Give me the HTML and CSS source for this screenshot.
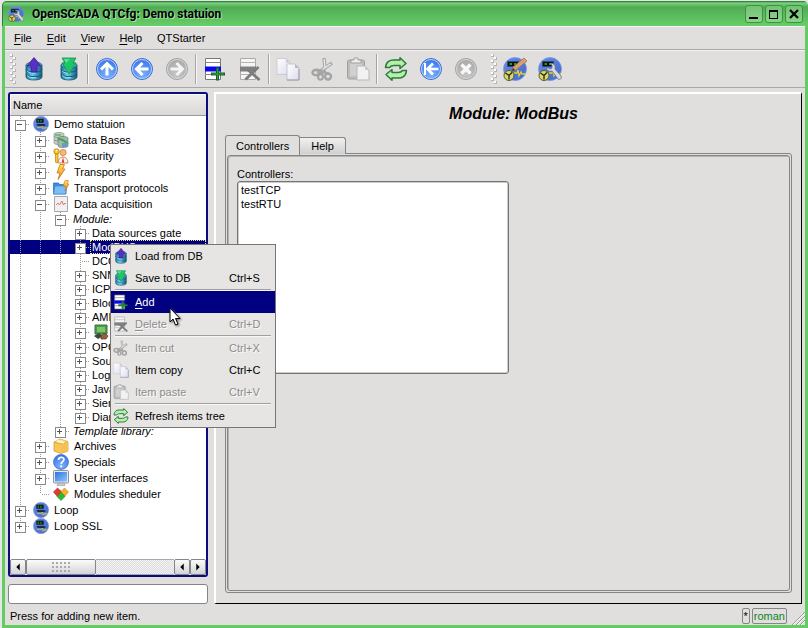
FILE: index.html
```
<!DOCTYPE html>
<html lang="en">
<head>
<meta charset="utf-8">
<title>OpenSCADA QTCfg: Demo statuion</title>
<link rel="stylesheet" href="styles.css">
</head>
<body>
<svg class="defs" width="0" height="0" aria-hidden="true">
  <defs>
    <radialGradient id="gBlue" cx="50%" cy="75%" r="75%"><stop offset="0" stop-color="#7db4fb"/><stop offset="1" stop-color="#3671e8"/></radialGradient>
    <radialGradient id="gGray" cx="50%" cy="75%" r="75%"><stop offset="0" stop-color="#c6c6c6"/><stop offset="1" stop-color="#a6a6a6"/></radialGradient>
    <linearGradient id="gDb"><stop offset="0" stop-color="#1b6f9c"/><stop offset=".4" stop-color="#62cdea"/><stop offset="1" stop-color="#155a80"/></linearGradient>
    <linearGradient id="gPage" x2="1" y2="1"><stop offset="0" stop-color="#ffffff"/><stop offset="1" stop-color="#dcdcec"/></linearGradient>
    <linearGradient id="gScada" x2="1" y2="1"><stop offset="0" stop-color="#6a8fe6"/><stop offset="1" stop-color="#3f66cc"/></linearGradient>
    <linearGradient id="gScreen" x2="1" y2="1"><stop offset="0" stop-color="#2f73e0"/><stop offset="1" stop-color="#8cc4ff"/></linearGradient>
    <linearGradient id="gFire" x2="0" y2="1"><stop offset="0" stop-color="#ffe25a"/><stop offset="1" stop-color="#f08a10"/></linearGradient>
  </defs>
  <symbol id="i-db" viewBox="0 0 24 24">
    <path d="M4 8v12c0 4 16 4 16 0V8z" fill="url(#gDb)" stroke="#20506a" stroke-width=".8"/>
    <path d="M4 12.500c0 3.500 16 3.500 16 0M4 17c0 3.500 16 3.500 16 0" fill="none" stroke="#175878"/>
    <path d="M5 14c2 2.500 7 2.300 9 2M5 18.500c2 2.500 7 2.300 9 2" fill="none" stroke="#a5eaf8" stroke-width=".8"/>
    <ellipse cx="12" cy="8" rx="8" ry="3" fill="#4fb4d4" stroke="#2a6a88" stroke-width=".8"/>
  </symbol>
  <symbol id="i-load" viewBox="0 0 24 24">
    <use href="#i-db"/>
    <path d="M12 .500L19 9h-4v6H9V9H5z" fill="#5730c4" stroke="#3c1c98" stroke-width=".8"/>
  </symbol>
  <symbol id="i-save" viewBox="0 0 24 24">
    <use href="#i-db"/>
    <path d="M5 1h14l-3 5h3l-7 11L5 6h3z" fill="#22c46a" stroke="#129048" stroke-width=".8"/>
    <path d="M7 2h6l-4 4" fill="#5be098"/>
  </symbol>
  <symbol id="i-up" viewBox="0 0 24 24">
    <circle cx="12" cy="12" r="10.500" fill="url(#gBlue)" stroke="#3f6fd0"/><circle cx="12" cy="12" r="9.500" fill="none" stroke="#b8d4ff"/>
    <path d="M12 18.500V7M6 12.500L12 6.500l6 6" fill="none" stroke="#fff" stroke-width="3"/>
  </symbol>
  <symbol id="i-left" viewBox="0 0 24 24">
    <circle cx="12" cy="12" r="10.500" fill="url(#gBlue)" stroke="#3f6fd0"/><circle cx="12" cy="12" r="9.500" fill="none" stroke="#b8d4ff"/>
    <path d="M18.500 12H7M12.500 6L6.500 12l6 6" fill="none" stroke="#fff" stroke-width="3"/>
  </symbol>
  <symbol id="i-right" viewBox="0 0 24 24">
    <circle cx="12" cy="12" r="10.500" fill="url(#gGray)" stroke="#a2a2a2"/><circle cx="12" cy="12" r="9.500" fill="none" stroke="#d8d8d8"/>
    <path d="M5.500 12H17M11.500 6l6 6-6 6" fill="none" stroke="#f4f4f4" stroke-width="3"/>
  </symbol>
  <symbol id="i-start" viewBox="0 0 24 24">
    <circle cx="12" cy="12" r="10.500" fill="url(#gBlue)" stroke="#3f6fd0"/><circle cx="12" cy="12" r="9.500" fill="none" stroke="#b8d4ff"/>
    <path d="M19.500 12H9M14 6.500L8.500 12l5.500 5.500" fill="none" stroke="#fff" stroke-width="2.600"/><path d="M6 6v12" stroke="#fff" stroke-width="2"/>
  </symbol>
  <symbol id="i-stop" viewBox="0 0 24 24">
    <circle cx="12" cy="12" r="10.500" fill="url(#gGray)" stroke="#a2a2a2"/><circle cx="12" cy="12" r="9.500" fill="none" stroke="#d8d8d8"/>
    <path d="M7.500 7.500l9 9M16.500 7.500l-9 9" stroke="#f8f8f8" stroke-width="3.200"/>
  </symbol>
  <symbol id="i-add" viewBox="0 0 24 24">
    <path d="M2.500 1.500h15v21h-15z" fill="#fff" stroke="#777"/>
    <path d="M2 5.500h16M2 17.500h16" stroke="#888"/><path d="M2 9.500h16v5H2z" fill="#0a0ae8"/>
    <path d="M14.500 10.500v13M8 17h14" stroke="#166428" stroke-width="3"/><path d="M14.500 11.500v11M9 17h12" stroke="#2ea048"/>
  </symbol>
  <symbol id="i-del" viewBox="0 0 24 24">
    <path d="M2.500 1.500h15v21h-15z" fill="#f4f4f4" stroke="#aaa"/>
    <path d="M2 5.500h16M2 17.500h16" stroke="#b4b4b4"/><path d="M2 9.500h16v5H2z" fill="#808080"/>
    <path d="M7.500 22.500L20.500 10M9 12l12.500 11" stroke="#7c7c7c" stroke-width="2.800"/>
  </symbol>
  <symbol id="i-copy" viewBox="0 0 24 24">
    <path d="M1 1.500h9l4 4v12H1z" fill="url(#gPage)" stroke="#c0c0cc" stroke-width=".7"/><path d="M10 1.500v4h4z" fill="#c8c8d8"/>
    <path d="M11 7h8l4 4v12H11z" fill="url(#gPage)" stroke="#b4b4c4" stroke-width=".7"/><path d="M19 7v4h4z" fill="#b8b8cc"/>
    <path d="M11 23h12V12" fill="none" stroke="#9c9cac"/>
  </symbol>
  <symbol id="i-cut" viewBox="0 0 24 24">
    <path d="M13 1l1 10-3 6" fill="none" stroke="#a8a8a8" stroke-width="3.400"/>
    <path d="M21 6L8 15l-2 1" fill="none" stroke="#acacac" stroke-width="3.400"/>
    <path d="M13.200 2l.7 8.500M19.500 7l-8 5.500" stroke="#ececec" stroke-width="1.200"/>
    <ellipse cx="5.500" cy="15.500" rx="4" ry="2.800" fill="none" stroke="#a4a4a4" stroke-width="2.400"/>
    <ellipse cx="9.500" cy="20" rx="2.400" ry="2.800" fill="none" stroke="#a4a4a4" stroke-width="2"/>
    <path d="M12 14l5 3" stroke="#a4a4a4" stroke-width="2.400"/><ellipse cx="17" cy="19.500" rx="3" ry="3" fill="none" stroke="#a4a4a4" stroke-width="2.400"/>
  </symbol>
  <symbol id="i-paste" viewBox="0 0 24 24">
    <rect x="1.500" y="3" width="17" height="19" rx="2" fill="#bcbcbc" stroke="#a0a0a0"/>
    <rect x="4" y="6" width="12" height="13" fill="#d0d0d0"/><path d="M5 6V3h3V1h4v2h3v3z" fill="#ececec" stroke="#a0a0a0"/>
    <path d="M11 9h8l4 4v10H11z" fill="#f2f2f2" stroke="#b8b8b8"/><path d="M19 9v4h4z" fill="#ccc"/>
  </symbol>
  <symbol id="i-refresh" viewBox="0 0 24 24">
    <path id="halfArrow" d="M1.500 10.500C2 4.500 6 2.500 11 3h5V.800L22 6.500l-6 5V8.500h-6c-2 0-3.500.500-4.500 2z" fill="#b4efac" stroke="#2c7a38" stroke-width="1.500" stroke-linejoin="round"/>
    <use href="#halfArrow" transform="rotate(180 12 12)"/>
  </symbol>
  <symbol id="i-scada" viewBox="0 0 24 24">
    <circle cx="12" cy="12" r="11.500" fill="url(#gScada)" stroke="#7c98e0" stroke-width=".7"/>
    <path d="M5 4h11v6H5z" fill="#101810"/><path d="M7 5.500h2v3H7zM11 5.500h2v3h-2z" fill="#1d9a30"/>
    <path d="M5 12h12l2 3h-12z" fill="#20284c"/>
    <path d="M6 17h7l1-2 2 4 1-2h5" fill="none" stroke="#d8d048" stroke-width="1.200"/><path d="M13 18h7v2h-7z" fill="#a8a878"/>
  </symbol>
  <symbol id="i-gauge" viewBox="0 0 24 24">
    <circle cx="12" cy="12" r="11.500" fill="url(#gScada)" stroke="#7c98e0" stroke-width=".7"/>
    <path d="M4.500 4.500h11v5h-11z" fill="#0c140c" stroke="#384878"/><path d="M6.500 6h2.500v2H6.500zM11 6h2.500v2H11z" fill="#1d9a30"/>
    <path d="M11 16h3l1-3 1 6 2-4 1 2h4" fill="none" stroke="#e0d030" stroke-width="1.300"/>
    <circle cx="6" cy="18.500" r="5" fill="#d8d868" stroke="#585820"/><path d="M2.500 16l3.500 2.500 3-3M6 18.500v4" fill="none" stroke="#202020" stroke-width="1.300"/>
  </symbol>
  <symbol id="i-pencil" viewBox="0 0 24 24">
    <use href="#i-gauge"/><path d="M9 14l1-4L21 1l3 3-11 9z" fill="#d8a070" stroke="#9c6848" stroke-width=".7"/><path d="M9 14l1-3 2 2z" fill="#332"/>
  </symbol>
  <symbol id="i-wrench" viewBox="0 0 24 24">
    <use href="#i-gauge"/><path d="M9 10l3 2 2-1V8l-3-1c4-2 7 1 6 5l6 7c1 3-1 4-3 3l-6-8c-3 1-6-1-5-4z" fill="#d4dae4" stroke="#606c80" stroke-width=".8"/>
  </symbol>
  <symbol id="i-bases" viewBox="0 0 16 16">
    <path d="M1 2c0-2 10-2 10 0v9c0 2-10 2-10 0z" fill="#c8ccc8" stroke="#7c8884" stroke-width=".6"/><path d="M1 4.500c2 1.500 8 1.500 10 0M1 8c2 1.500 8 1.500 10 0" fill="none" stroke="#8c9894"/>
    <path d="M5 6c0-2 10-2 10 0v8c0 2-10 2-10 0z" fill="#a4b8ac" stroke="#5c7474" stroke-width=".6"/><path d="M5 7c3 0 7 2 10 5" fill="none" stroke="#3fa840" stroke-width="2"/><path d="M9 11h6v4H9z" fill="#6c9ac4"/>
    <path d="M2 3h6" stroke="#60b860" stroke-width="1.500"/>
  </symbol>
  <symbol id="i-security" viewBox="0 0 16 16">
    <circle cx="10" cy="4.500" r="3.200" fill="#f2b878" stroke="#b87838" stroke-width=".6"/><path d="M5 15c0-8 10-8 10 0z" fill="#f4f4f8" stroke="#d87828" stroke-width=".9"/><path d="M10 9l1 5-1 1-1-1z" fill="#d02020"/>
    <circle cx="3.500" cy="3.500" r="2.700" fill="#ffc928" stroke="#b87c08" stroke-width=".8"/><path d="M2.500 6h2.500v8l-1.500 1-1-1z" fill="#ffc928" stroke="#b87c08" stroke-width=".7"/><circle cx="3.500" cy="2.600" r=".8" fill="#fff"/>
  </symbol>
  <symbol id="i-bolt" viewBox="0 0 16 16">
    <path d="M7 .500h4.500L9.500 5H12L5 15.500 7 9H4z" fill="url(#gFire)" stroke="#c87418" stroke-width=".8"/>
  </symbol>
  <symbol id="i-folder" viewBox="0 0 16 16">
    <path d="M.500 3h5l1 1.500H13V14H.500z" fill="#3d8ee0" stroke="#2464b0" stroke-width=".7"/><path d="M2 6h12l-1.500 8H.500z" fill="#78bcf8" stroke="#3c80cc" stroke-width=".6"/>
    <path d="M12 .500h3.500L14 4h2l-4 7 1-5h-3z" fill="url(#gFire)" stroke="#c87418" stroke-width=".6"/>
  </symbol>
  <symbol id="i-chart" viewBox="0 0 16 16">
    <path d="M1.500 .500h13v15h-13z" fill="#f0f0f2" stroke="#a8a8a8"/><path d="M3 9l2-2 1.500 2L9 5l1.500 4L12 7l1 1" fill="none" stroke="#e07878"/>
  </symbol>
  <symbol id="i-system" viewBox="0 0 16 16">
    <path d="M2 1h12v9H2z" fill="#4c9c48" stroke="#407050"/><path d="M4 3h8v5H4z" fill="#7cc868"/><path d="M1 12l5-3 4 3-5 3z" fill="#3c4838"/><path d="M8 12c2-3 5-3 7 0l-2 3H8z" fill="#98603c" stroke="#503828" stroke-width=".7"/>
  </symbol>
  <symbol id="i-box" viewBox="0 0 16 16">
    <path d="M1 4l7 2 7-2v9l-7 2.500L1 13z" fill="#f8c850" stroke="#c89428" stroke-width=".7"/><path d="M1 4l6-3 8 2.500L8 6z" fill="#fce8a0" stroke="#d0a038" stroke-width=".7"/><path d="M8 6v9l7-2V4z" fill="#f4c058"/><path d="M4 2.500l7 2.500" stroke="#fff"/>
  </symbol>
  <symbol id="i-help" viewBox="0 0 16 16">
    <circle cx="8" cy="8" r="7.500" fill="url(#gBlue)" stroke="#3a6cc8" stroke-width=".7"/>
    <path d="M5.500 6c0-3.500 5.500-3.500 5.500-.500C11 7.500 8.200 7.300 8.200 10" fill="none" stroke="#fff" stroke-width="1.700"/><circle cx="8.200" cy="12.300" r="1.100" fill="#fff"/>
  </symbol>
  <symbol id="i-screen" viewBox="0 0 16 16">
    <rect x=".500" y=".500" width="15" height="12.500" rx="1" fill="#e8e8ec" stroke="#8c90a0"/><path d="M2 2h12v9.500H2z" fill="url(#gScreen)"/><path d="M5 13h6l1 2.500H4z" fill="#c8ccd4" stroke="#9094a0" stroke-width=".6"/>
  </symbol>
  <symbol id="i-modules" viewBox="0 0 16 16">
    <path d="M4.500 2L9 6l-4.500 4.500L.500 6z" fill="#e83828" stroke="#b02818" stroke-width=".6"/><path d="M11.500 2L15.500 6l-4 4.500L7.500 6z" fill="#f8b030" stroke="#c08818" stroke-width=".6"/><path d="M8 6l4 4.500-4 4-4-4z" fill="#30b830" stroke="#208820" stroke-width=".6"/>
  </symbol>
</svg>

<div class="window">
  <header class="titlebar">
    <svg class="ic16"><use href="#i-wrench"/></svg>
    <h1>OpenSCADA QTCfg: Demo statuion</h1>
    <div class="winbtns">
      <button type="button" aria-label="Minimize"><svg viewBox="0 0 16 16"><path d="M3 11h9v2H3z"/></svg></button>
      <button type="button" aria-label="Maximize"><svg viewBox="0 0 16 16"><path d="M3 4h9v9H3zM4 6v6h7V6z" fill-rule="evenodd"/></svg></button>
      <button type="button" aria-label="Close"><svg viewBox="0 0 16 16"><path d="M4 4l8 8M12 4l-8 8" stroke="#000" stroke-width="2.200"/></svg></button>
    </div>
  </header>

  <nav class="menubar">
    <button type="button"><u>F</u>ile</button>
    <button type="button"><u>E</u>dit</button>
    <button type="button"><u>V</u>iew</button>
    <button type="button"><u>H</u>elp</button>
    <button type="button">QTStarter</button>
  </nav>

  <div class="toolbar" role="toolbar">
    <i class="handle"></i>
    <button type="button" aria-label="Load from DB"><svg><use href="#i-load"/></svg></button>
    <button type="button" aria-label="Save to DB"><svg><use href="#i-save"/></svg></button>
    <i class="bar"></i>
    <button type="button" aria-label="Up"><svg><use href="#i-up"/></svg></button>
    <button type="button" aria-label="Previous"><svg><use href="#i-left"/></svg></button>
    <button type="button" aria-label="Next" disabled><svg><use href="#i-right"/></svg></button>
    <i class="bar"></i>
    <button type="button" aria-label="Add"><svg><use href="#i-add"/></svg></button>
    <button type="button" aria-label="Delete" disabled><svg><use href="#i-del"/></svg></button>
    <i class="bar"></i>
    <button type="button" aria-label="Item copy"><svg><use href="#i-copy"/></svg></button>
    <button type="button" aria-label="Item cut" disabled><svg><use href="#i-cut"/></svg></button>
    <button type="button" aria-label="Item paste" disabled><svg><use href="#i-paste"/></svg></button>
    <i class="bar"></i>
    <button type="button" aria-label="Refresh"><svg><use href="#i-refresh"/></svg></button>
    <button type="button" aria-label="Start"><svg><use href="#i-start"/></svg></button>
    <button type="button" aria-label="Stop" disabled><svg><use href="#i-stop"/></svg></button>
    <i class="handle"></i>
    <button type="button" aria-label="Vision development"><svg><use href="#i-pencil"/></svg></button>
    <button type="button" aria-label="Configurator"><svg><use href="#i-wrench"/></svg></button>
  </div>

  <main class="work">
    <section class="side">
      <div class="tree">
        <div class="treehead">Name</div>
        <ul class="nodes">
          <li><div class="row"><button type="button" class="exp open" aria-label="Collapse"></button><svg><use href="#i-scada"/></svg><span>Demo statuion</span></div>
            <ul>
              <li><div class="row"><button type="button" class="exp" aria-label="Expand"></button><svg><use href="#i-bases"/></svg><span>Data Bases</span></div></li>
              <li><div class="row"><button type="button" class="exp" aria-label="Expand"></button><svg><use href="#i-security"/></svg><span>Security</span></div></li>
              <li><div class="row"><button type="button" class="exp" aria-label="Expand"></button><svg><use href="#i-bolt"/></svg><span>Transports</span></div></li>
              <li><div class="row"><button type="button" class="exp" aria-label="Expand"></button><svg><use href="#i-folder"/></svg><span>Transport protocols</span></div></li>
              <li><div class="row"><button type="button" class="exp open" aria-label="Collapse"></button><svg><use href="#i-chart"/></svg><span>Data acquisition</span></div>
                <ul>
                  <li><div class="row plain"><button type="button" class="exp open" aria-label="Collapse"></button><em>Module:</em></div>
                    <ul>
                      <li><div class="row plain"><button type="button" class="exp" aria-label="Expand"></button><span>Data sources gate</span></div></li>
                      <li><div class="row plain selected"><button type="button" class="exp" aria-label="Expand"></button><span>ModBUS</span></div></li>
                      <li><div class="row plain"><i class="leaf"></i><span>DCON</span></div></li>
                      <li><div class="row plain"><button type="button" class="exp" aria-label="Expand"></button><span>SNMP</span></div></li>
                      <li><div class="row plain"><button type="button" class="exp" aria-label="Expand"></button><span>ICP DAS</span></div></li>
                      <li><div class="row plain"><button type="button" class="exp" aria-label="Expand"></button><span>Block</span></div></li>
                      <li><div class="row plain"><button type="button" class="exp" aria-label="Expand"></button><span>AMR</span></div></li>
                      <li><div class="row"><button type="button" class="exp" aria-label="Expand"></button><svg><use href="#i-system"/></svg></div></li>
                      <li><div class="row plain"><button type="button" class="exp" aria-label="Expand"></button><span>OPC</span></div></li>
                      <li><div class="row plain"><button type="button" class="exp" aria-label="Expand"></button><span>Sound</span></div></li>
                      <li><div class="row plain"><button type="button" class="exp" aria-label="Expand"></button><span>Logic</span></div></li>
                      <li><div class="row plain"><button type="button" class="exp" aria-label="Expand"></button><span>Java</span></div></li>
                      <li><div class="row plain"><button type="button" class="exp" aria-label="Expand"></button><span>Siemens</span></div></li>
                      <li><div class="row plain"><button type="button" class="exp" aria-label="Expand"></button><span>Diamond</span></div></li>
                    </ul>
                  </li>
                  <li><div class="row plain"><button type="button" class="exp" aria-label="Expand"></button><em>Template library:</em></div></li>
                </ul>
              </li>
              <li><div class="row"><button type="button" class="exp" aria-label="Expand"></button><svg><use href="#i-box"/></svg><span>Archives</span></div></li>
              <li><div class="row"><button type="button" class="exp" aria-label="Expand"></button><svg><use href="#i-help"/></svg><span>Specials</span></div></li>
              <li><div class="row"><button type="button" class="exp" aria-label="Expand"></button><svg><use href="#i-screen"/></svg><span>User interfaces</span></div></li>
              <li><div class="row"><i class="leaf"></i><svg><use href="#i-modules"/></svg><span>Modules sheduler</span></div></li>
            </ul>
          </li>
          <li><div class="row"><button type="button" class="exp" aria-label="Expand"></button><svg><use href="#i-scada"/></svg><span>Loop</span></div></li>
          <li><div class="row"><button type="button" class="exp" aria-label="Expand"></button><svg><use href="#i-scada"/></svg><span>Loop SSL</span></div></li>
        </ul>
        <div class="hscroll">
          <button type="button" class="sbtn" aria-label="Scroll left"><svg viewBox="0 0 16 16"><path d="M10 4v8L6 8z"/></svg></button>
          <div class="thumb"><i></i></div>
          <div class="track"></div>
          <button type="button" class="sbtn" aria-label="Scroll left"><svg viewBox="0 0 16 16"><path d="M10 4v8L6 8z"/></svg></button>
          <button type="button" class="sbtn" aria-label="Scroll right"><svg viewBox="0 0 16 16"><path d="M6 4v8l4-4z"/></svg></button>
        </div>
      </div>
      <input class="search" type="text" aria-label="Search items">
    </section>

    <section class="page">
      <h2>Module: ModBus</h2>
      <div class="tabs" role="tablist">
        <button type="button" role="tab" class="tab active" aria-selected="true">Controllers</button>
        <button type="button" role="tab" class="tab" aria-selected="false">Help</button>
      </div>
      <div class="pane">
        <div class="paneinner">
          <div class="caption" id="ctl">Controllers:</div>
          <ul class="list" aria-labelledby="ctl">
            <li>testTCP</li>
            <li>testRTU</li>
          </ul>
        </div>
      </div>
    </section>
  </main>

  <footer class="status">
    <span class="msg">Press for adding new item.</span>
    <span class="cell">*</span>
    <span class="cell user">roman</span>
    <svg class="grip" viewBox="0 0 14 14"><path d="M1 14L14 1M5 14l9-9M9 14l5-5" stroke="#999"/><path d="M2 14L14 2M6 14l8-8M10 14l4-4" stroke="#fff"/></svg>
  </footer>
</div>

<div class="popup" role="menu">
  <button type="button" role="menuitem"><svg><use href="#i-load"/></svg><span>Load from DB</span></button>
  <button type="button" role="menuitem"><svg><use href="#i-save"/></svg><span>Save to DB</span><kbd>Ctrl+S</kbd></button>
  <hr>
  <button type="button" role="menuitem" class="hot"><svg><use href="#i-add"/></svg><span><u>A</u>dd</span></button>
  <button type="button" role="menuitem" disabled><svg><use href="#i-del"/></svg><span><u>D</u>elete</span><kbd>Ctrl+D</kbd></button>
  <hr>
  <button type="button" role="menuitem" disabled><svg><use href="#i-cut"/></svg><span>Item cut</span><kbd>Ctrl+X</kbd></button>
  <button type="button" role="menuitem"><svg><use href="#i-copy"/></svg><span>Item copy</span><kbd>Ctrl+C</kbd></button>
  <button type="button" role="menuitem" disabled><svg><use href="#i-paste"/></svg><span>Item paste</span><kbd>Ctrl+V</kbd></button>
  <hr>
  <button type="button" role="menuitem"><svg><use href="#i-refresh"/></svg><span>Refresh items tree</span></button>
</div>
<svg class="pointer" viewBox="0 0 12 19" aria-hidden="true"><path d="M1 1v14l3-3 2.500 6 2.500-1-2.500-5.500H11z" fill="#fff" stroke="#000"/></svg>
</body>
</html>
```
FILE: styles.css
```
* { box-sizing: border-box; }

body {
  margin: 0;
  padding: 1px 0 0 2px;
  height: 100vh;
  background: #e6e6e6;
  font: 11px/14px "Liberation Sans", Arial, sans-serif;
  color: #000;
  overflow: hidden;
}

.defs { position: absolute; }

button {
  margin: 0;
  padding: 0;
  border: 0;
  background: none;
  font: inherit;
  color: inherit;
}

svg { display: block; flex: none; }
ul { margin: 0; padding: 0; list-style: none; }
u { text-underline-offset: 2px; }

.window {
  height: 100%;
  display: flex;
  flex-direction: column;
  background: #e0dfde;
  border: solid #62ce62;
  border-width: 0 3px 3px;
  border-top-left-radius: 5px;
  border-top-right-radius: 5px;
}

/* Title bar */
.titlebar {
  display: flex;
  align-items: center;
  height: 25px;
  flex: none;
  margin: 0 -3px;
  padding: 0 5px;
  gap: 8px;
  background: linear-gradient(#1f6b2c, #7ad47e 2px, #52ab54 6px, #66cf68);
  border-left: 1px solid #2f7d36;
  border-radius: 5px 5px 0 0;
}
.ic16 { width: 16px; height: 16px; }
.titlebar h1 {
  flex: 1;
  margin: 0;
  font: bold 12px/16px Roboto, "Liberation Sans", sans-serif;
  text-shadow: 1px 1px #a4e0a4;
}
.winbtns { display: flex; gap: 2px; }
.winbtns button {
  width: 18px;
  height: 18px;
  border: 1px solid #3c9442;
  border-radius: 3px;
  background: linear-gradient(#74c276, #8ad48a);
}

/* Menus and tools */
.menubar {
  display: flex;
  flex: none;
  height: 24px;
  padding-left: 9px;
  gap: 15px;
  align-items: center;
  border-top: 1px solid #f4f4f4;
  border-bottom: 1px solid #a8a8a8;
}
.toolbar {
  display: flex;
  flex: none;
  align-items: center;
  height: 38px;
  padding-left: 3px;
  border-top: 1px solid #f2f2f2;
  border-bottom: 1px solid #a8a8a8;
}
.toolbar button { width: 35px; height: 34px; display: grid; place-items: center; }
.toolbar svg { width: 24px; height: 24px; }
.bar { width: 1px; height: 30px; margin: 0 1px; background: #a4a4a4; box-shadow: 1px 0 #f8f8f8; }
.handle {
  width: 6px;
  height: 30px;
  margin: 0 0 0 2px;
  background:
    linear-gradient(#fff, #fff) 0 0 / 0 0,
    conic-gradient(from 0deg at 2px 2px, transparent 270deg, #fff 0) 0 0 / 6px 6px,
    conic-gradient(from 0deg at 3px 3px, transparent 270deg, #b4b4b4 0) 0 0 / 6px 6px,
    conic-gradient(from 0deg at 2px 2px, transparent 270deg, #fff 0) 3px 3px / 6px 6px,
    conic-gradient(from 0deg at 3px 3px, transparent 270deg, #b4b4b4 0) 3px 3px / 6px 6px;
}
.handle ~ .handle { margin-left: 8px; }

.work { display: flex; flex: 1; min-height: 0; gap: 6px; padding: 4px 3px 0; }

/* Navigation tree */
.side { width: 200px; flex: none; display: flex; flex-direction: column; gap: 7px; }
.tree {
  flex: 1;
  min-height: 0;
  display: flex;
  flex-direction: column;
  background: #fff;
  border: 2px solid #0c0c7c;
  border-radius: 3px;
  overflow: hidden;
}
.treehead {
  flex: none;
  padding: 4px 3px 3px;
  border-bottom: 1px solid #9a9a9a;
  box-shadow: inset 1px 1px #fafafa;
  background: linear-gradient(#eeedec, #d9d8d7);
}
.nodes { flex: 1; min-height: 0; overflow: hidden; white-space: nowrap; }
.nodes ul { padding-left: 20px; }
.nodes li { position: relative; }
.nodes li::before {
  content: "";
  position: absolute;
  left: 10px;
  top: 0;
  bottom: 0;
  width: 1px;
  z-index: 1;
  background: linear-gradient(#999 50%, transparent 50%) 0 0 / 1px 2px;
}
.nodes li:last-child::before { bottom: auto; height: 8px; }
.row { display: flex; align-items: center; height: 16px; }
.row.plain { height: 14px; }
.row svg { width: 16px; height: 16px; margin: 0 2px 0 3px; }
.row span, .row em { padding: 0 3px; }
.row.plain span { padding-left: 2px; }
.exp, .leaf {
  position: relative;
  z-index: 2;
  width: 20px;
  height: 9px;
  flex: none;
  background: linear-gradient(90deg, #999 50%, transparent 50%) 0 4px / 2px 1px repeat-x;
  background-clip: content-box;
  padding-left: 11px;
}
.exp::before {
  content: "";
  position: absolute;
  left: 5px;
  top: 0;
  width: 9px;
  height: 9px;
  border: 1px solid #8a8a8a;
  background:
    linear-gradient(#555, #555) 1px 3px / 5px 1px no-repeat,
    linear-gradient(#555, #555) 3px 1px / 1px 5px no-repeat,
    #fff;
}
.exp.open::before { background: linear-gradient(#555, #555) 1px 3px / 5px 1px no-repeat, #fff; }
/* The highlight runs across the whole tree; the guides stay above it. */
.row.selected {
  margin-left: -60px;
  padding-left: 60px;
  color: #fff;
  background: #000080;
}
.row.selected::before {
  content: "";
  align-self: stretch;
  width: 60px;
  margin-left: -60px;
  background:
    linear-gradient(transparent 50%, #000080 50%) 0 0 / 1px 2px,
    repeating-linear-gradient(90deg, #000080 0 10px, #999 10px 11px, #000080 11px 20px);
}
.row.selected span { flex: 1; outline: 1px dotted #e8e878; outline-offset: -1px; }

.hscroll { display: flex; flex: none; height: 16px; }
.sbtn, .thumb {
  width: 16px;
  height: 16px;
  border: 1px solid #858585;
  border-radius: 2px;
  background: linear-gradient(#fbfbfb, #d4d4d4);
}
.sbtn svg { width: 14px; height: 14px; }
.thumb { width: 70px; display: grid; place-items: center; }
.thumb i { width: 19px; height: 10px; background: radial-gradient(circle at 1px 1px, #aaa 1px, transparent 1px) 0 0 / 4px 4px; }
.track { flex: 1; border: solid #aaa; border-width: 1px 0; background: repeating-conic-gradient(#dcdcdc 0 25%, #f4f4f4 0 50%) 0 0 / 2px 2px; }

.search { width: 100%; height: 20px; border: 1px solid #858585; border-radius: 3px; background: #fff; padding: 0 3px; font: inherit; }

/* Page */
.page {
  flex: 1;
  display: flex;
  flex-direction: column;
  padding: 12px 9px 10px;
  border: 2px solid;
  border-color: #fff #000 #000 #fff;
  border-right-width: 1px;
  border-bottom-width: 1px;
}
.page h2 { margin: 0 0 13px; font-size: 16px; line-height: 16px; font-style: italic; text-align: center; padding-left: 10px; }
.tabs { display: flex; align-items: flex-end; height: 20px; position: relative; z-index: 1; margin-bottom: -2px; flex: none; }
.tab {
  height: 17px;
  padding: 0 11px;
  margin-bottom: 1px;
  border: 1px solid #858585;
  border-left: 0;
  border-bottom: 0;
  border-radius: 0 3px 0 0;
  background: linear-gradient(#f0f0f0, #d0d0d0);
}
.tab.active { height: 20px; margin: 0; padding: 0 10px; border-left: 1px solid #858585; border-radius: 3px 3px 0 0; background: #e0dfde; }
.pane { flex: 1; display: flex; padding: 1px; border: 1px solid #858585; border-radius: 0 3px 3px 3px; }
.paneinner { flex: 1; border: 1px solid #858585; border-radius: 3px; padding: 11px 9px; box-shadow: inset 1px 1px #b4b4b4; }
.list { width: 50%; height: 193px; border: 1px solid #757575; border-radius: 3px; background: #fff; padding: 1px 3px; box-shadow: inset 0 0 0 1px #ccc; }

/* Status bar */
.status { flex: none; display: flex; align-items: center; height: 21px; padding: 2px 0 0 5px; gap: 2px; }
.msg { flex: 1; }
.cell { height: 16px; line-height: 14px; padding: 0 1px; border: 1px solid #858585; border-radius: 2px; }
.user { color: #0c8428; }
.grip { width: 14px; height: 14px; margin: 4px 0 0 2px; }

/* Context menu */
.popup {
  position: absolute;
  z-index: 5;
  left: 110px;
  top: 244px;
  width: 166px;
  border: 1px solid #757575;
  background: #e6e5e4;
}
.popup button { display: flex; align-items: center; width: 100%; height: 22px; padding: 0 4px 0 2px; text-align: left; }
.popup svg { width: 16px; height: 16px; margin-right: 6px; }
.popup span { flex: 1; }
.popup kbd { font: inherit; width: 42px; }
.popup hr { height: 2px; margin: 0 4px; border: 0; background: linear-gradient(#a0a0a0 50%, #f8f8f8 50%); }
.popup button:disabled { color: #8c8c8c; text-shadow: 1px 1px #fafafa; }
.popup .hot { background: #000080; color: #fff; }

.pointer { position: absolute; z-index: 6; left: 169px; top: 307px; width: 12px; height: 19px; filter: drop-shadow(1px 1px 1px #666); }
```
